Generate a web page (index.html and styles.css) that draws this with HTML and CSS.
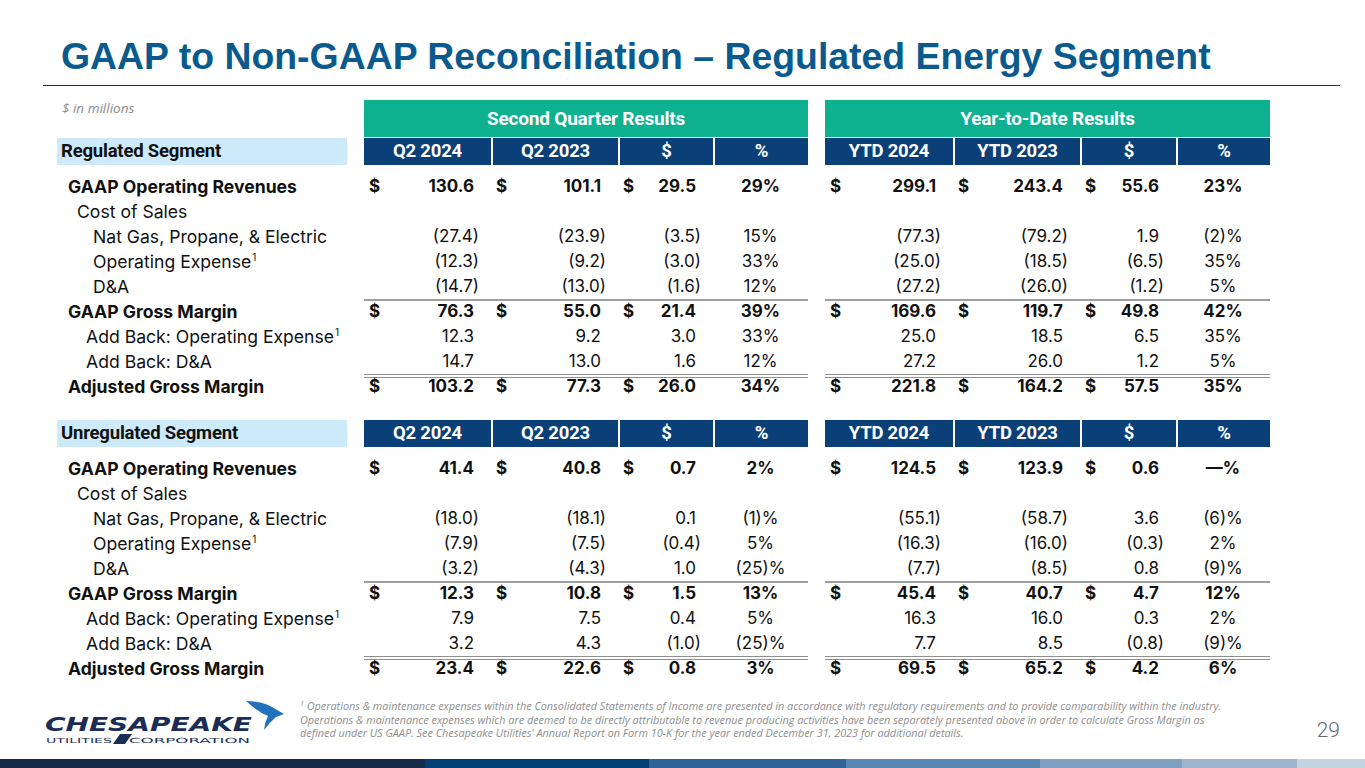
FILE: index.html
```html
<!DOCTYPE html>
<html lang="en">
<head>
<meta charset="utf-8">
<title>GAAP to Non-GAAP Reconciliation – Regulated Energy Segment</title>
<link rel="stylesheet" href="styles.css">
</head>
<body>
<div class="slide">
  <header class="title-bar">
    <h1>GAAP to Non-GAAP Reconciliation – Regulated Energy Segment</h1>
  </header>

  <table class="recon recon-first">
    <colgroup>
      <col class="c-label"><col class="c-gap">
      <col class="c-a"><col class="c-a"><col class="c-b"><col class="c-b">
      <col class="c-gap">
      <col class="c-a2"><col class="c-a"><col class="c-b2"><col class="c-b3">
    </colgroup>
    <thead>
      <tr class="band">
        <th class="units">$ in millions</th><th></th>
        <th colspan="4" class="green">Second Quarter Results</th><th></th>
        <th colspan="4" class="green">Year-to-Date Results</th>
      </tr>
      <tr class="cols">
        <th class="seg">Regulated Segment</th><th class="blank"></th>
        <th class="h first">Q2 2024</th><th class="h">Q2 2023</th><th class="h">$</th><th class="h">%</th>
        <th class="blank"></th>
        <th class="h first">YTD 2024</th><th class="h">YTD 2023</th><th class="h">$</th><th class="h">%</th>
      </tr>
    </thead>
    <tbody>
      <tr class="spacer"><td colspan="11"></td></tr>
      <tr class="bold">
        <td class="lbl l1">GAAP Operating Revenues</td><td></td>
        <td class="num"><span class="cur">$</span>130.6</td><td class="num"><span class="cur">$</span>101.1</td><td class="num"><span class="cur">$</span>29.5</td><td class="pct">29%</td><td></td>
        <td class="num"><span class="cur">$</span>299.1</td><td class="num"><span class="cur">$</span>243.4</td><td class="num"><span class="cur">$</span>55.6</td><td class="pct">23%</td>
      </tr>
      <tr>
        <td class="lbl l2">Cost of Sales</td><td></td>
        <td></td><td></td><td></td><td></td><td></td><td></td><td></td><td></td><td></td>
      </tr>
      <tr>
        <td class="lbl l3">Nat Gas, Propane, &amp; Electric</td><td></td>
        <td class="num ng">(27.4)</td><td class="num ng">(23.9)</td><td class="num ng">(3.5)</td><td class="pct">15%</td><td></td>
        <td class="num ng">(77.3)</td><td class="num ng">(79.2)</td><td class="num">1.9</td><td class="pct">(2)%</td>
      </tr>
      <tr>
        <td class="lbl l3">Operating Expense<sup class="fn">1</sup></td><td></td>
        <td class="num ng">(12.3)</td><td class="num ng">(9.2)</td><td class="num ng">(3.0)</td><td class="pct">33%</td><td></td>
        <td class="num ng">(25.0)</td><td class="num ng">(18.5)</td><td class="num ng">(6.5)</td><td class="pct">35%</td>
      </tr>
      <tr>
        <td class="lbl l3">D&amp;A</td><td></td>
        <td class="num ng">(14.7)</td><td class="num ng">(13.0)</td><td class="num ng">(1.6)</td><td class="pct">12%</td><td></td>
        <td class="num ng">(27.2)</td><td class="num ng">(26.0)</td><td class="num ng">(1.2)</td><td class="pct">5%</td>
      </tr>
      <tr class="bold subtotal">
        <td class="lbl l1">GAAP Gross Margin</td><td></td>
        <td class="num"><span class="cur">$</span>76.3</td><td class="num"><span class="cur">$</span>55.0</td><td class="num"><span class="cur">$</span>21.4</td><td class="pct">39%</td><td></td>
        <td class="num"><span class="cur">$</span>169.6</td><td class="num"><span class="cur">$</span>119.7</td><td class="num"><span class="cur">$</span>49.8</td><td class="pct">42%</td>
      </tr>
      <tr>
        <td class="lbl l4">Add Back: Operating Expense<sup class="fn">1</sup></td><td></td>
        <td class="num">12.3</td><td class="num">9.2</td><td class="num">3.0</td><td class="pct">33%</td><td></td>
        <td class="num">25.0</td><td class="num">18.5</td><td class="num">6.5</td><td class="pct">35%</td>
      </tr>
      <tr>
        <td class="lbl l4">Add Back: D&amp;A</td><td></td>
        <td class="num">14.7</td><td class="num">13.0</td><td class="num">1.6</td><td class="pct">12%</td><td></td>
        <td class="num">27.2</td><td class="num">26.0</td><td class="num">1.2</td><td class="pct">5%</td>
      </tr>
      <tr class="bold total">
        <td class="lbl l1">Adjusted Gross Margin</td><td></td>
        <td class="num"><span class="cur">$</span>103.2</td><td class="num"><span class="cur">$</span>77.3</td><td class="num"><span class="cur">$</span>26.0</td><td class="pct">34%</td><td></td>
        <td class="num"><span class="cur">$</span>221.8</td><td class="num"><span class="cur">$</span>164.2</td><td class="num"><span class="cur">$</span>57.5</td><td class="pct">35%</td>
      </tr>
    </tbody>
  </table>

  <table class="recon recon-second">
    <colgroup>
      <col class="c-label"><col class="c-gap">
      <col class="c-a"><col class="c-a"><col class="c-b"><col class="c-b">
      <col class="c-gap">
      <col class="c-a2"><col class="c-a"><col class="c-b2"><col class="c-b3">
    </colgroup>
    <thead>
      <tr class="cols">
        <th class="seg">Unregulated Segment</th><th class="blank"></th>
        <th class="h first">Q2 2024</th><th class="h">Q2 2023</th><th class="h">$</th><th class="h">%</th>
        <th class="blank"></th>
        <th class="h first">YTD 2024</th><th class="h">YTD 2023</th><th class="h">$</th><th class="h">%</th>
      </tr>
    </thead>
    <tbody>
      <tr class="spacer"><td colspan="11"></td></tr>
      <tr class="bold">
        <td class="lbl l1">GAAP Operating Revenues</td><td></td>
        <td class="num"><span class="cur">$</span>41.4</td><td class="num"><span class="cur">$</span>40.8</td><td class="num"><span class="cur">$</span>0.7</td><td class="pct">2%</td><td></td>
        <td class="num"><span class="cur">$</span>124.5</td><td class="num"><span class="cur">$</span>123.9</td><td class="num"><span class="cur">$</span>0.6</td><td class="pct">—%</td>
      </tr>
      <tr>
        <td class="lbl l2">Cost of Sales</td><td></td>
        <td></td><td></td><td></td><td></td><td></td><td></td><td></td><td></td><td></td>
      </tr>
      <tr>
        <td class="lbl l3">Nat Gas, Propane, &amp; Electric</td><td></td>
        <td class="num ng">(18.0)</td><td class="num ng">(18.1)</td><td class="num">0.1</td><td class="pct">(1)%</td><td></td>
        <td class="num ng">(55.1)</td><td class="num ng">(58.7)</td><td class="num">3.6</td><td class="pct">(6)%</td>
      </tr>
      <tr>
        <td class="lbl l3">Operating Expense<sup class="fn">1</sup></td><td></td>
        <td class="num ng">(7.9)</td><td class="num ng">(7.5)</td><td class="num ng">(0.4)</td><td class="pct">5%</td><td></td>
        <td class="num ng">(16.3)</td><td class="num ng">(16.0)</td><td class="num ng">(0.3)</td><td class="pct">2%</td>
      </tr>
      <tr>
        <td class="lbl l3">D&amp;A</td><td></td>
        <td class="num ng">(3.2)</td><td class="num ng">(4.3)</td><td class="num">1.0</td><td class="pct">(25)%</td><td></td>
        <td class="num ng">(7.7)</td><td class="num ng">(8.5)</td><td class="num">0.8</td><td class="pct">(9)%</td>
      </tr>
      <tr class="bold subtotal">
        <td class="lbl l1">GAAP Gross Margin</td><td></td>
        <td class="num"><span class="cur">$</span>12.3</td><td class="num"><span class="cur">$</span>10.8</td><td class="num"><span class="cur">$</span>1.5</td><td class="pct">13%</td><td></td>
        <td class="num"><span class="cur">$</span>45.4</td><td class="num"><span class="cur">$</span>40.7</td><td class="num"><span class="cur">$</span>4.7</td><td class="pct">12%</td>
      </tr>
      <tr>
        <td class="lbl l4">Add Back: Operating Expense<sup class="fn">1</sup></td><td></td>
        <td class="num">7.9</td><td class="num">7.5</td><td class="num">0.4</td><td class="pct">5%</td><td></td>
        <td class="num">16.3</td><td class="num">16.0</td><td class="num">0.3</td><td class="pct">2%</td>
      </tr>
      <tr>
        <td class="lbl l4">Add Back: D&amp;A</td><td></td>
        <td class="num">3.2</td><td class="num">4.3</td><td class="num ng">(1.0)</td><td class="pct">(25)%</td><td></td>
        <td class="num">7.7</td><td class="num">8.5</td><td class="num ng">(0.8)</td><td class="pct">(9)%</td>
      </tr>
      <tr class="bold total">
        <td class="lbl l1">Adjusted Gross Margin</td><td></td>
        <td class="num"><span class="cur">$</span>23.4</td><td class="num"><span class="cur">$</span>22.6</td><td class="num"><span class="cur">$</span>0.8</td><td class="pct">3%</td><td></td>
        <td class="num"><span class="cur">$</span>69.5</td><td class="num"><span class="cur">$</span>65.2</td><td class="num"><span class="cur">$</span>4.2</td><td class="pct">6%</td>
      </tr>
    </tbody>
  </table>

  <footer class="footer">
    <svg class="logo" width="250" height="53" viewBox="0 0 250 53" aria-label="Chesapeake Utilities Corporation">
      <path class="bird" d="M206,4 Q222,4 232,10 L244,17 L236,20 Q230,25 224,33 Q225,25 228,19 Q218,15 206,4 Z"/>
      <text class="logo-main" x="5" y="34" textLength="207" lengthAdjust="spacingAndGlyphs">CHESAPEAKE</text>
      <text class="logo-sub" x="6" y="46" textLength="66" lengthAdjust="spacingAndGlyphs">UTILITIES</text>
      <polygon class="logo-slash" points="80,37 92,37 85,47 73,47"/>
      <text class="logo-sub" x="89" y="46" textLength="121" lengthAdjust="spacingAndGlyphs">CORPORATION</text>
    </svg>
    <p class="footnote">
      <span class="line"><sup class="fn-mark">1</sup> Operations &amp; maintenance expenses within the Consolidated Statements of Income are presented in accordance with regulatory requirements and to provide comparability within the industry.</span>
      <span class="line">Operations &amp; maintenance expenses which are deemed to be directly attributable to revenue producing activities have been separately presented above in order to calculate Gross Margin as</span>
      <span class="line">defined under US GAAP. See Chesapeake Utilities' Annual Report on Form 10-K for the year ended December 31, 2023 for additional details.</span>
    </p>
    <div class="page-num">29</div>
  </footer>

  <div class="bar">
    <div class="seg1"></div><div class="seg2"></div><div class="seg3"></div><div class="seg4"></div><div class="seg5"></div><div class="seg6"></div><div class="seg7"></div>
  </div>
</div>
</body>
</html>
```

FILE: styles.css
```css
html, body {
  margin: 0;
  padding: 0;
  background: #ffffff;
}

.slide {
  width: 1365px;
  height: 768px;
  overflow: hidden;
  display: flex;
  flex-direction: column;
  font-family: Inter, Roboto, "Liberation Sans", sans-serif;
  color: #111111;
}

/* Title */
.title-bar {
  margin-left: 43px;
  width: 1297px;
  padding: 35px 0 8px 0;
  border-bottom: 1px solid #2e2e2e;
}

.title-bar h1 {
  margin: 0;
  padding-left: 18px;
  font-family: "Liberation Sans", Arial, sans-serif;
  font-weight: 700;
  font-size: 37.4px;
  line-height: 42px;
  color: #0b5a8d;
  white-space: nowrap;
}

/* Tables */
.recon {
  margin-left: 57px;
  width: 1213px;
  table-layout: fixed;
  border-collapse: separate;
  border-spacing: 0;
  font-size: 17px;
}

.recon-first { margin-top: 14px; }
.recon-second { margin-top: 21px; }

.c-label { width: 290px; }
.c-gap { width: 17px; }
.c-a { width: 127px; }
.c-a2 { width: 128px; }
.c-b { width: 95px; }
.c-b2 { width: 96px; }
.c-b3 { width: 94px; }

.recon th,
.recon td {
  padding: 0;
  white-space: nowrap;
}

.band th {
  height: 37px;
  line-height: 37px;
  vertical-align: top;
}

.band .units {
  text-align: left;
  padding: 0 0 0 5px;
  font-family: "Open Sans", sans-serif;
  font-size: 13.5px;
  line-height: 17px;
  font-weight: 400;
  font-style: italic;
  color: #8c8c8c;
}

.band .green {
  background: #0db08f;
  color: #ffffff;
  font-family: Roboto, sans-serif;
  font-size: 19px;
  font-weight: 700;
  letter-spacing: -0.2px;
  text-align: center;
  border-bottom: 1px solid #ffffff;
}

.cols th {
  height: 27px;
  line-height: 27px;
  font-family: Roboto, sans-serif;
  font-size: 18.5px;
  font-weight: 700;
  letter-spacing: -0.2px;
}

.cols .seg {
  background: #cdeafb;
  text-align: left;
  padding-left: 4px;
  color: #111111;
}

.cols .h {
  background: #0b3f77;
  color: #ffffff;
  text-align: center;
  border-left: 2px solid #ffffff;
}

.cols .h.first {
  border-left: 0;
}

.spacer td {
  height: 9px;
  line-height: 9px;
}

.recon tbody tr:not(.spacer) td {
  height: 25px;
  line-height: 25px;
}

.bold td {
  font-weight: 700;
}

.lbl { font-size: 17.6px; }
.lbl.l1 { padding-left: 11px; }
.lbl.l2 { padding-left: 20px; }
.lbl.l3 { padding-left: 36px; }
.lbl.l4 { padding-left: 29px; }

.fn {
  font-size: 10px;
  line-height: 0;
  vertical-align: 7px;
  margin-left: 1px;
}

.num {
  text-align: right;
  padding-right: 17px !important;
  padding-left: 5px !important;
}

.num.ng {
  padding-right: 12px !important;
}

.cur {
  float: left;
}

.pct {
  text-align: center;
}

.subtotal td.num,
.subtotal td.pct {
  box-shadow: inset 0 2px 0 #9e9e9e;
}

.total td.num,
.total td.pct {
  box-shadow: inset 0 1px 0 #8f8f8f, inset 0 3px 0 #ffffff, inset 0 4px 0 #8f8f8f;
}

/* Footer */
.footer {
  height: 78px;
  display: flex;
  align-items: flex-start;
}

.logo {
  margin: 16px 0 0 40px;
  flex: none;
}

.bird { fill: #2271bb; }
.logo-slash { fill: #1b2d57; }

.logo-main {
  font-family: "DejaVu Sans", sans-serif;
  font-weight: 700;
  font-style: italic;
  font-size: 19px;
  fill: #1b2d57;
}

.logo-sub {
  font-family: "DejaVu Sans", sans-serif;
  font-size: 7px;
  fill: #1b2d57;
}

.footnote {
  margin: 18px 0 0 10px;
  font-family: "Open Sans", sans-serif;
  font-style: italic;
  font-size: 10.85px;
  line-height: 13.5px;
  color: #8e8e8e;
}

.footnote .line {
  display: block;
  white-space: nowrap;
}

.fn-mark {
  font-size: 7px;
  line-height: 0;
  vertical-align: 4px;
}

.page-num {
  margin: 37px 25px 0 auto;
  font-family: Roboto, "Liberation Sans", sans-serif;
  font-weight: 300;
  font-size: 21px;
  line-height: 24px;
  color: #6a6a6a;
}

/* Bottom colour bar */
.bar {
  height: 9px;
  display: flex;
}

.bar div { height: 100%; }
.seg1 { width: 425px; background: #162a4c; }
.seg2 { width: 224px; background: #003f75; }
.seg3 { width: 197px; background: #2d6396; }
.seg4 { width: 194px; background: #5886b0; }
.seg5 { width: 142px; background: #7ea0c3; }
.seg6 { width: 115px; background: #9fb5cc; }
.seg7 { flex: 1; background: #c5d3e1; }
```
